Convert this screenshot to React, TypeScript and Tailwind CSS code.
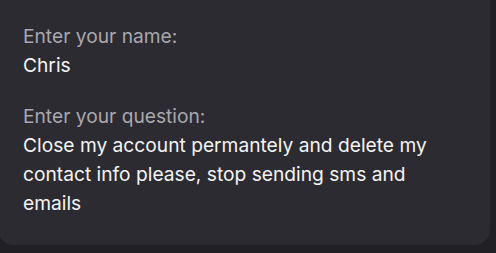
export default function App() {
  return (
    <div className="w-[496px] h-[253px] overflow-hidden bg-[#212025] font-['Inter',sans-serif]">
      <div className="-ml-[2px] w-[492px] h-[245px] rounded-b-2xl bg-[#2c2b31] pl-[25px] pr-10 pt-[22px] text-[19.2px] leading-[29px]">
        <div className="flex flex-col gap-[22px]">
          <div>
            <p className="text-[#a9a8ae]">Enter your name:</p>
            <p className="text-[#f4f4f6]">Chris</p>
          </div>
          <div>
            <p className="text-[#a9a8ae]">Enter your question:</p>
            <p className="text-[#f4f4f6]">
              Close my account permantely and delete my contact info please, stop sending sms and emails
            </p>
          </div>
        </div>
      </div>
    </div>
  );
}
